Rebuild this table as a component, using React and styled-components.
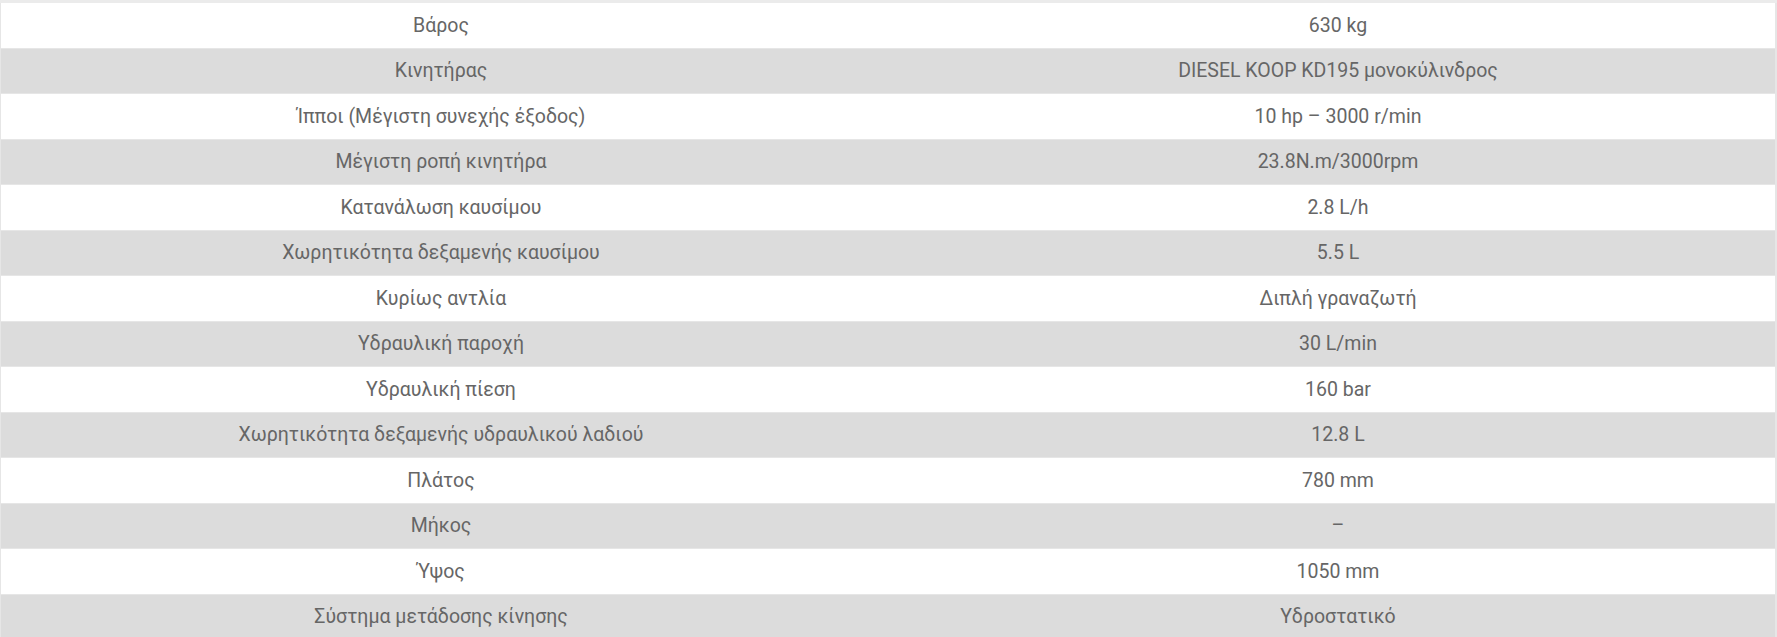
import React from 'react';
import styled, { createGlobalStyle } from 'styled-components';

const GlobalStyle = createGlobalStyle`
  html, body {
    margin: 0;
    padding: 0;
    background: #ffffff;
  }
`;

const Table = styled.table`
  width: 100%;
  border-collapse: collapse;
  table-layout: fixed;
  border-top: 3px solid #ebebeb;
  border-left: 1px solid #e6e6e6;
  border-right: 2px solid #e6e6e6;
  font-family: Roboto, "Noto Sans", sans-serif;
  font-size: 19.5px;
  color: #666666;
`;

const Row = styled.tr`
  background: ${(props) => (props.$shaded ? '#dcdcdc' : '#ffffff')};
`;

const Cell = styled.td`
  height: 44.5px;
  padding: ${(props) => (props.$value ? '0 0 0 20px' : '0')};
  width: ${(props) => (props.$value ? 'auto' : '880px')};
  text-align: center;
  vertical-align: middle;
  border-bottom: 1px solid #e6e6e6;
  line-height: 1.2;
`;

const specs = [
  ['Βάρος', '630 kg'],
  ['Κινητήρας', 'DIESEL KOOP KD195 μονοκύλινδρος'],
  ['Ίπποι (Μέγιστη συνεχής έξοδος)', '10 hp – 3000 r/min'],
  ['Μέγιστη ροπή κινητήρα', '23.8N.m/3000rpm'],
  ['Κατανάλωση καυσίμου', '2.8 L/h'],
  ['Χωρητικότητα δεξαμενής καυσίμου', '5.5 L'],
  ['Κυρίως αντλία', 'Διπλή γραναζωτή'],
  ['Υδραυλική παροχή', '30 L/min'],
  ['Υδραυλική πίεση', '160 bar'],
  ['Χωρητικότητα δεξαμενής υδραυλικού λαδιού', '12.8 L'],
  ['Πλάτος', '780 mm'],
  ['Μήκος', '–'],
  ['Ύψος', '1050 mm'],
  ['Σύστημα μετάδοσης κίνησης', 'Υδροστατικό'],
];

export default function App() {
  return (
    <>
      <GlobalStyle />
      <Table>
        <tbody>
          {specs.map(([label, value], i) => (
            <Row key={label} $shaded={i % 2 === 1}>
              <Cell>{label}</Cell>
              <Cell $value>{value}</Cell>
            </Row>
          ))}
        </tbody>
      </Table>
    </>
  );
}
